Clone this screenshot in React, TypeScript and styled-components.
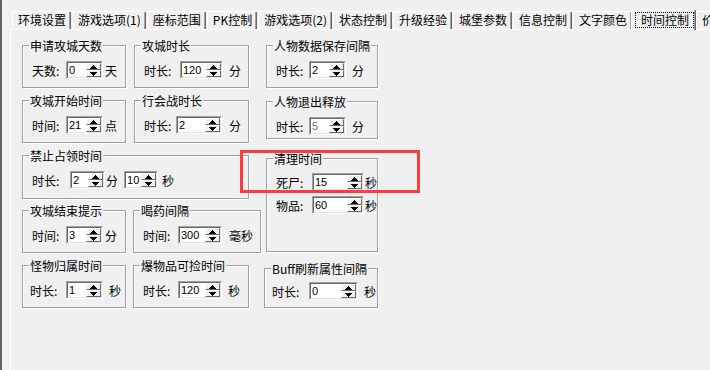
import React from 'react';
import styled, { createGlobalStyle } from 'styled-components';

const GlobalStyle = createGlobalStyle`
  html, body {
    margin: 0;
    padding: 0;
    background: #f0f0f0;
    overflow: hidden;
  }
  body {
    font-family: "Noto Sans CJK SC", "Noto Sans", sans-serif;
    font-size: 12px;
    color: #000;
  }
`;

const TABS = [
  '环境设置',
  '游戏选项(1)',
  '座标范围',
  'PK控制',
  '游戏选项(2)',
  '状态控制',
  '升级经验',
  '城堡参数',
  '信息控制',
  '文字颜色',
  '时间控制',
  '价格设置',
];
const ACTIVE_TAB = '时间控制';

const Screen = styled.div`
  position: relative;
  height: 370px;
  box-sizing: border-box;
  border-left: 2px solid #646464;
  padding: 9px 0 0 8px;
  display: flex;
  flex-direction: column;
`;

const TabStrip = styled.div`
  display: flex;
  align-items: flex-end;
  height: 20px;
  padding-left: 2px;
  white-space: nowrap;
  position: relative;
  z-index: 1;
`;

const Tab = styled.div<{ $active?: boolean }>`
  flex: none;
  box-sizing: border-box;
  height: ${(p) => (p.$active ? 21 : 18)}px;
  margin: ${(p) => (p.$active ? '0 0 -1px -2px' : '0 1px 0 0')};
  padding: ${(p) => (p.$active ? '2px 1px 0 3px' : '0 4px 0 5px')};
  line-height: ${(p) => (p.$active ? 14 : 16)}px;
  background: #f0f0f0;
  border-top: 1px solid #fff;
  border-left: 1px solid #fff;
  border-right: 1px solid #696969;
  box-shadow: inset -1px 0 0 #a0a0a0;
  border-top-left-radius: 2px;
  border-top-right-radius: 2px;
`;

const FocusRect = styled.span`
  display: block;
  border: 1px dotted #000;
  padding: 0 4px 0 5px;
`;

const Page = styled.div`
  flex: 1;
  border-top: 1px solid #fff;
  border-left: 1px solid #fff;
  padding: 15px 0 0 11px;
`;

const Form = styled.div`
  display: grid;
  grid-template-columns: 111px 132px 112px;
  grid-template-rows: repeat(5, 43px);
  row-gap: 12px;
  align-items: start;
`;

type GroupBoxProps = {
  $w: number;
  $h?: number;
  $dx?: number;
  $dy?: number;
  $pl?: number;
  $pt?: number;
  $col: string;
  $row: string;
};

const GroupBox = styled.div<GroupBoxProps>`
  position: relative;
  box-sizing: border-box;
  grid-column: ${(p) => p.$col};
  grid-row: ${(p) => p.$row};
  width: ${(p) => p.$w}px;
  height: ${(p) => p.$h ?? 43}px;
  margin: ${(p) => p.$dy ?? 0}px 0 0 ${(p) => p.$dx ?? 0}px;
  padding: ${(p) => p.$pt ?? 15}px 0 0 ${(p) => p.$pl ?? 9}px;
  border: 1px solid #a0a0a0;
  box-shadow: inset 1px 1px 0 #fff, 1px 1px 0 #fff;
  display: flex;
  flex-direction: column;
  gap: 5px;
`;

const GroupTitle = styled.span`
  position: absolute;
  top: -7px;
  left: 6px;
  padding: 0 1px;
  line-height: 14px;
  background: #f0f0f0;
  white-space: nowrap;
`;

const Field = styled.div`
  display: flex;
  align-items: center;
  height: 18px;
`;

const Label = styled.span<{ $w: number }>`
  flex: none;
  width: ${(p) => p.$w}px;
  white-space: nowrap;
`;

const Unit = styled.span<{ $gap: number }>`
  flex: none;
  margin-left: ${(p) => p.$gap}px;
  white-space: nowrap;
`;

const SpinFrame = styled.div<{ $w: number; $ml?: number }>`
  flex: none;
  box-sizing: border-box;
  width: ${(p) => p.$w}px;
  height: 18px;
  margin-left: ${(p) => p.$ml ?? 0}px;
  border: 1px solid;
  border-color: #a0a0a0 #fff #fff #a0a0a0;
  display: flex;
`;

const SpinInner = styled.div`
  flex: 1;
  display: flex;
  align-items: center;
  background: #fff;
  border: 1px solid;
  border-color: #696969 #e3e3e3 #e3e3e3 #696969;
`;

const SpinText = styled.span<{ $disabled?: boolean }>`
  flex: 1;
  padding-left: 1px;
  font-family: "Liberation Sans", Arial, sans-serif;
  font-size: 11px;
  line-height: 14px;
  color: ${(p) => (p.$disabled ? '#6d6d6d' : '#000')};
`;

const UpDown = styled.div`
  flex: none;
  width: 15px;
  height: 14px;
  display: flex;
  flex-direction: column;
`;

const UpDownHalf = styled.div`
  flex: 1;
  box-sizing: border-box;
  display: flex;
  align-items: center;
  justify-content: center;
  background: #f0f0f0;
  border: 1px solid;
  border-color: #fff #696969 #696969 #fff;
`;

const Highlight = styled.div`
  position: absolute;
  left: 238px;
  top: 150px;
  width: 180px;
  height: 43px;
  box-sizing: border-box;
  border: 3px solid #ff3b3b;
  pointer-events: none;
  z-index: 2;
`;

function Arrow({ down }: { down?: boolean }) {
  return (
    <svg width="7" height="4" viewBox="0 0 7 4" shapeRendering="crispEdges">
      <path
        fill="#000"
        d={
          down
            ? 'M0 0h7v1H6v1H5v1H4v1H3V3H2V2H1V1H0z'
            : 'M3 0h1v1h1v1h1v1h1v1H0V3h1V2h1V1h1z'
        }
      />
    </svg>
  );
}

function Spin({
  w,
  value,
  ml,
  disabled,
}: {
  w: number;
  value: string;
  ml?: number;
  disabled?: boolean;
}) {
  return (
    <SpinFrame $w={w} $ml={ml}>
      <SpinInner>
        <SpinText $disabled={disabled}>{value}</SpinText>
        <UpDown>
          <UpDownHalf>
            <Arrow />
          </UpDownHalf>
          <UpDownHalf>
            <Arrow down />
          </UpDownHalf>
        </UpDown>
      </SpinInner>
    </SpinFrame>
  );
}

// one label + spin + unit row, the most common case on this page
function SpinField({
  label,
  lw,
  w,
  value,
  unit,
  gap,
  disabled,
}: {
  label: string;
  lw: number;
  w: number;
  value: string;
  unit: string;
  gap: number;
  disabled?: boolean;
}) {
  return (
    <Field>
      <Label $w={lw}>{label}</Label>
      <Spin w={w} value={value} disabled={disabled} />
      <Unit $gap={gap}>{unit}</Unit>
    </Field>
  );
}

export default function App() {
  return (
    <>
      <GlobalStyle />
      <Screen>
        <TabStrip>
          {TABS.map((t) =>
            t === ACTIVE_TAB ? (
              <Tab key={t} $active>
                <FocusRect>{t}</FocusRect>
              </Tab>
            ) : (
              <Tab key={t}>{t}</Tab>
            )
          )}
        </TabStrip>
        <Page>
          <Form>
            <GroupBox $col="1" $row="1" $w={104}>
              <GroupTitle>申请攻城天数</GroupTitle>
              <SpinField label="天数:" lw={34} w={37} value="0" unit="天" gap={2} />
            </GroupBox>
            <GroupBox $col="2" $row="1" $w={115} $dx={1}>
              <GroupTitle>攻城时长</GroupTitle>
              <SpinField label="时长:" lw={36} w={43} value="120" unit="分" gap={6} />
            </GroupBox>
            <GroupBox $col="3" $row="1" $w={112} $dx={1}>
              <GroupTitle>人物数据保存间隔</GroupTitle>
              <SpinField label="时长:" lw={33} w={37} value="2" unit="分" gap={6} />
            </GroupBox>

            <GroupBox $col="1" $row="2" $w={104}>
              <GroupTitle>攻城开始时间</GroupTitle>
              <SpinField label="时间:" lw={34} w={37} value="21" unit="点" gap={2} />
            </GroupBox>
            <GroupBox $col="2" $row="2" $w={115} $dx={1}>
              <GroupTitle>行会战时长</GroupTitle>
              <SpinField label="时长:" lw={32} w={46} value="2" unit="分" gap={7} />
            </GroupBox>
            <GroupBox $col="3" $row="2" $w={112} $dx={1} $dy={1} $h={38}>
              <GroupTitle>人物退出释放</GroupTitle>
              <SpinField label="时长:" lw={33} w={37} value="5" unit="分" gap={6} disabled />
            </GroupBox>

            <GroupBox $col="1 / span 2" $row="3" $w={227} $h={44}>
              <GroupTitle>禁止占领时间</GroupTitle>
              <Field>
                <Label $w={38}>时长:</Label>
                <Spin w={35} value="2" />
                <Unit $gap={1}>分</Unit>
                <Spin w={34} value="10" ml={6} />
                <Unit $gap={4}>秒</Unit>
              </Field>
            </GroupBox>
            <GroupBox $col="3" $row="3 / span 2" $w={112} $dx={1} $dy={3} $h={94} $pt={14}>
              <GroupTitle>清理时间</GroupTitle>
              <SpinField label="死尸:" lw={36} w={52} value="15" unit="秒" gap={1} />
              <SpinField label="物品:" lw={36} w={52} value="60" unit="秒" gap={1} />
            </GroupBox>

            <GroupBox $col="1" $row="4" $w={104}>
              <GroupTitle>攻城结束提示</GroupTitle>
              <SpinField label="时间:" lw={34} w={37} value="3" unit="分" gap={2} />
            </GroupBox>
            <GroupBox $col="2" $row="4" $w={128}>
              <GroupTitle>喝药间隔</GroupTitle>
              <SpinField label="时间:" lw={35} w={44} value="300" unit="毫秒" gap={7} />
            </GroupBox>

            <GroupBox $col="1" $row="5" $w={104} $pl={7}>
              <GroupTitle>怪物归属时间</GroupTitle>
              <SpinField label="时长:" lw={36} w={37} value="1" unit="秒" gap={6} />
            </GroupBox>
            <GroupBox $col="2" $row="5" $w={116}>
              <GroupTitle>爆物品可捡时间</GroupTitle>
              <SpinField label="时长:" lw={35} w={44} value="120" unit="秒" gap={6} />
            </GroupBox>
            <GroupBox $col="3" $row="5" $w={114} $dx={-1} $dy={3} $h={40} $pl={7} $pt={13}>
              <GroupTitle>Buff刷新属性间隔</GroupTitle>
              <SpinField label="时长:" lw={37} w={49} value="0" unit="秒" gap={6} />
            </GroupBox>
          </Form>
        </Page>
        <Highlight />
      </Screen>
    </>
  );
}
